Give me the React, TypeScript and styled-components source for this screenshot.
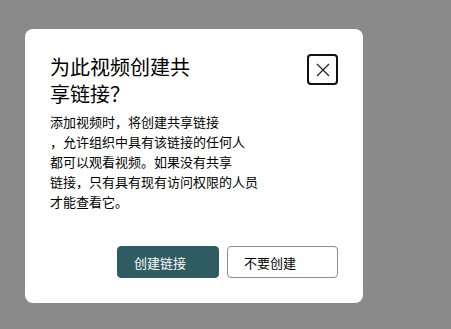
import styled, { createGlobalStyle } from "styled-components"

const GlobalStyle = createGlobalStyle`
    html, body {
        margin: 0;
        padding: 0;
        background: #8a8a8a;
        height: 100%;
    }

    body {
        font-family: "Noto Sans CJK SC", "Noto Sans", sans-serif;
        color: #000;
    }
`

export default function App() {
    return (
        <>
            <GlobalStyle />
            <Overlay>
                <Dialog role="dialog" aria-labelledby="share-title">
                    <Header>
                        <Title id="share-title">
                            为此视频创建共{"\n"}享链接？
                        </Title>
                        <CloseButton aria-label="关闭">
                            <svg width="14" height="14" viewBox="0 0 14 14">
                                <path d="M1 1 L13 13 M13 1 L1 13" stroke="#222" strokeWidth="1.2" fill="none" />
                            </svg>
                        </CloseButton>
                    </Header>

                    <Body>
                        添加视频时，将创建共享链接{"\n"}
                        ，允许组织中具有该链接的任何人{"\n"}
                        都可以观看视频。如果没有共享{"\n"}
                        链接，只有具有现有访问权限的人员{"\n"}
                        才能查看它。
                    </Body>

                    <Footer>
                        <Button $primary>创建链接</Button>
                        <Button>不要创建</Button>
                    </Footer>
                </Dialog>
            </Overlay>
        </>
    )
}

const Overlay = styled.div`
    padding: 29px 0 0 25px;
`

const Dialog = styled.div`
    width: 338px;
    box-sizing: border-box;
    background: #fff;
    border-radius: 8px;
    padding: 24px 25px 25px 25px;
`

const Header = styled.div`
    display: flex;
    justify-content: space-between;
    align-items: flex-start;
`

const Title = styled.h2`
    margin: 0;
    font-size: 20px;
    font-weight: 400;
    line-height: 27px;
    white-space: pre-line;
`

const CloseButton = styled.button`
    width: 31px;
    height: 31px;
    margin-top: 1px;
    box-sizing: border-box;
    border: 2px solid #111;
    border-radius: 4px;
    background: #fff;
    display: flex;
    align-items: center;
    justify-content: center;
    padding: 0;
`

const Body = styled.p`
    margin: 5px 0 0 0;
    font-size: 13px;
    line-height: 20px;
    white-space: pre-line;
`

const Footer = styled.div`
    display: flex;
    justify-content: flex-end;
    gap: 8px;
    margin-top: 34px;
`

const Button = styled.button<{ $primary?: boolean }>`
    height: 32px;
    width: ${p => (p.$primary ? "102px" : "111px")};
    box-sizing: border-box;
    border-radius: 4px;
    border: 1px solid ${p => (p.$primary ? "#2e5c62" : "#8d8d8d")};
    background: ${p => (p.$primary ? "#2e5c62" : "#fff")};
    color: ${p => (p.$primary ? "#fff" : "#000")};
    font-family: "Noto Sans CJK SC", "Noto Sans", sans-serif;
    font-size: 13px;
    text-align: left;
    padding: 0 0 0 16px;
`
